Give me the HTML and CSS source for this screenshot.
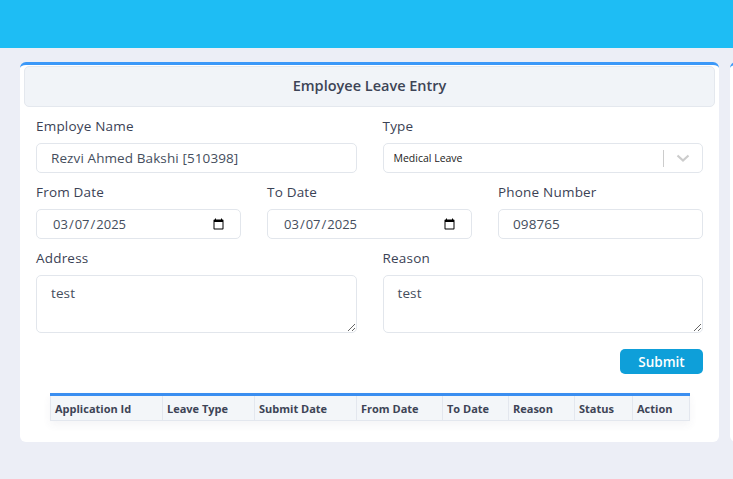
FILE: index.html
```html
<!DOCTYPE html>
<html lang="en">
<head>
<meta charset="utf-8">
<title>Employee Leave Entry</title>
<link rel="stylesheet" href="styles.css">
</head>
<body>
<header class="topbar"></header>
<main class="main">
  <section class="card">
    <div class="card-header">Employee Leave Entry</div>
    <form class="form">
      <div class="row two">
        <div class="field">
          <label class="label">Employe Name</label>
          <input class="input" type="text" value="Rezvi Ahmed Bakshi [510398]">
        </div>
        <div class="field">
          <label class="label">Type</label>
          <div class="select">
            <span class="select-value">Medical Leave</span>
            <span class="select-sep"></span>
            <svg class="select-arrow" width="20" height="20" viewBox="0 0 20 20"><path d="M4.5 7.5 L10 12.5 L15.5 7.5" fill="none" stroke="#cccccc" stroke-width="2.2"/></svg>
          </div>
        </div>
      </div>
      <div class="row three">
        <div class="field">
          <label class="label">From Date</label>
          <input class="input date" type="date" value="2025-03-07">
        </div>
        <div class="field">
          <label class="label">To Date</label>
          <input class="input date" type="date" value="2025-03-07">
        </div>
        <div class="field">
          <label class="label">Phone Number</label>
          <input class="input" type="text" value="098765">
        </div>
      </div>
      <div class="row two">
        <div class="field">
          <label class="label">Address</label>
          <textarea class="input area">test</textarea>
        </div>
        <div class="field">
          <label class="label">Reason</label>
          <textarea class="input area">test</textarea>
        </div>
      </div>
      <div class="actions">
        <button type="button" class="btn">Submit</button>
      </div>
      <div class="table-wrap">
        <table class="table">
          <thead>
            <tr>
              <th class="c1">Application Id</th>
              <th class="c2">Leave Type</th>
              <th class="c3">Submit Date</th>
              <th class="c4">From Date</th>
              <th class="c5">To Date</th>
              <th class="c6">Reason</th>
              <th class="c7">Status</th>
              <th class="c8">Action</th>
            </tr>
          </thead>
        </table>
      </div>
    </form>
  </section>
  <section class="card side"></section>
</main>
</body>
</html>
```

FILE: styles.css
```css
* { box-sizing: border-box; }
html, body { margin: 0; padding: 0; }
body {
  background: #eceef6;
  font-family: "Open Sans", "Noto Sans", sans-serif;
  color: #3b4255;
  width: 733px;
  height: 479px;
  overflow: hidden;
}
.topbar {
  height: 48px;
  background: #1ebdf4;
}
.main {
  display: flex;
  gap: 11px;
  padding: 14px 0 0 20px;
  overflow: hidden;
}
.card {
  flex: 0 0 698px;
  background: #ffffff;
  border-top: 3px solid #3b98f8;
  border-radius: 6px;
  padding: 1px 4px 19px;
}
.card.side {
  flex: 0 0 300px;
  height: 380px;
}
.card-header {
  height: 41px;
  background: #f1f4f8;
  border: 1px solid #e4e8ee;
  border-radius: 5px;
  display: flex;
  align-items: center;
  justify-content: center;
  padding-bottom: 2px;
  font-size: 14.5px;
  font-weight: 600;
  color: #3d4456;
}
.form {
  padding: 10px 12px 0 12px;
  display: flex;
  flex-direction: column;
}
.row {
  display: grid;
  column-gap: 26px;
  margin-bottom: 10px;
}
.row.two { grid-template-columns: 1fr 1fr; }
.row.three { grid-template-columns: 1fr 1fr 1fr; }
.field { display: flex; flex-direction: column; }
.label {
  font-size: 13.5px;
  letter-spacing: 0.2px;
  line-height: 18px;
  height: 20px;
  margin-bottom: 6px;
  color: #3b4255;
}
.input {
  height: 30px;
  border: 1px solid #e2e6ec;
  border-radius: 5px;
  padding: 0 14px;
  font-family: "Open Sans", "Noto Sans", sans-serif;
  font-size: 13.5px;
  letter-spacing: 0.1px;
  color: #454e5d;
  background: #fff;
  outline: none;
  width: 100%;
}
.input.date { padding: 0 13px 0 15px; font-size: 13px; letter-spacing: 0; }
.input.area {
  height: 58px;
  padding: 7px 14px;
  resize: vertical;
  line-height: 20px;
}
.select {
  height: 30px;
  border: 1px solid #e2e6ec;
  border-radius: 5px;
  display: flex;
  align-items: center;
  padding-left: 10px;
}
.select-value {
  flex: 1;
  font-size: 10.5px;
  font-weight: 500;
  color: #222;
}
.select-sep {
  width: 1px;
  height: 17px;
  background: #cccccc;
}
.select-arrow { margin: 0 9px 0 9px; }
.actions {
  display: flex;
  justify-content: flex-end;
  margin-top: 6px;
}
.btn {
  width: 83px;
  height: 25px;
  border: none;
  border-radius: 5px;
  background: #0e9fd9;
  color: #fff;
  font-family: "Open Sans", "Noto Sans", sans-serif;
  font-size: 13.5px;
  font-weight: 600;
  padding: 0;
}
.table-wrap {
  margin: 19px 13px 0 14px;
  box-shadow: 0 4px 8px rgba(60, 70, 100, 0.06);
  border-radius: 4px 4px 0 0;
}
.table {
  width: 100%;
  border-collapse: collapse;
  border-top: 3px solid #3a8ef0;
  table-layout: fixed;
}
.table th {
  height: 26px;
  background: #f3f6f9;
  border-right: 1px solid #e3e7ee;
  border-bottom: 1px solid #e3e7ee;
  text-align: left;
  padding: 0 4px;
  font-size: 11px;
  font-weight: 700;
  color: #3d4456;
  white-space: nowrap;
}
.table th.c1 { border-left: 1px solid #e3e7ee; width: 112px; }
.table th.c2 { width: 92px; }
.table th.c3 { width: 102px; }
.table th.c4 { width: 86px; }
.table th.c5 { width: 66px; }
.table th.c6 { width: 66px; }
.table th.c7 { width: 58px; }
.table th.c8 { width: 57px; }
```
